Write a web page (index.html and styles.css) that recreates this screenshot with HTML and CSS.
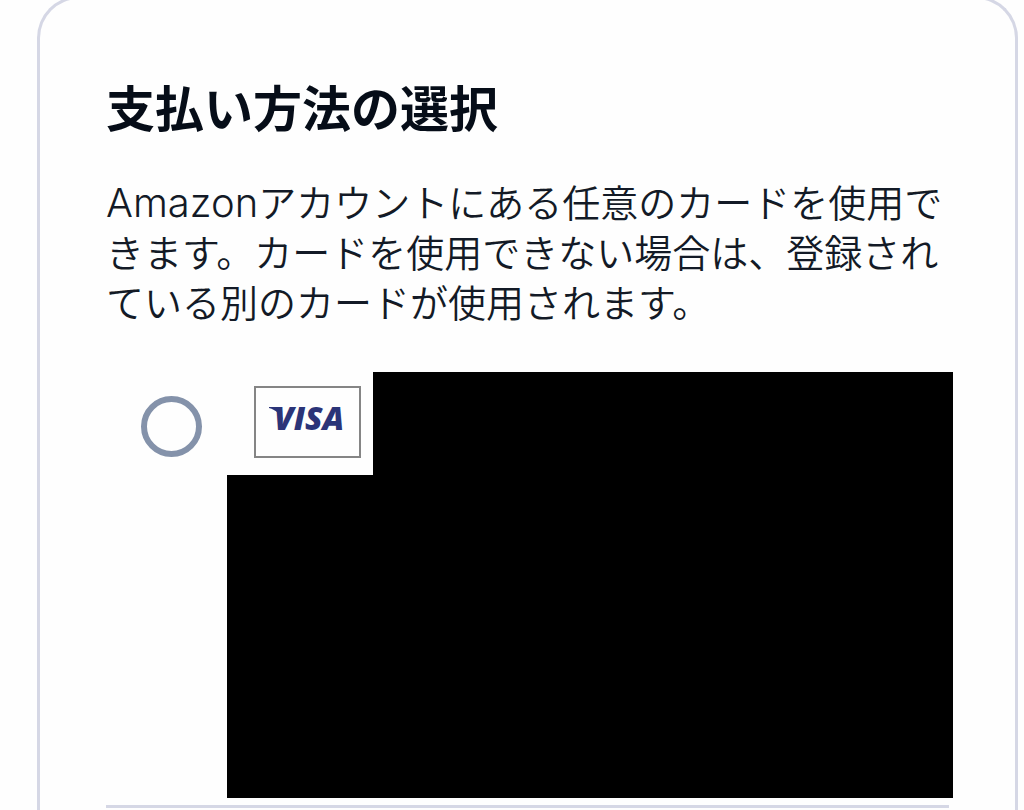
FILE: index.html
```
<!DOCTYPE html>
<html lang="ja">
<head>
    <meta charset="UTF-8">
    <meta name="viewport" content="width=device-width, initial-scale=1.0">
    <title>支払い方法の選択</title>
    <link rel="stylesheet" href="styles.css">
</head>
<body>
    <main class="card">
        <h1>支払い方法の選択</h1>
        <p class="description"><span class="latin">Amazon</span>アカウントにある任意のカードを使用できます。カードを使用できない場合は、登録されている別のカードが使用されます。</p>

        <div class="payment-list">
            <div class="payment">
                <input class="payment-radio" type="radio" name="payment" id="visa" aria-label="VISA">
                <label class="payment-body" for="visa">
                    <span class="payment-head">
                        <span class="brand">
                            <svg width="90" height="56" viewBox="0 0 90 56">
                                <path d="M6 13H17L20 27C18 20 13 16 6 14Z"/>
                                <text x="11" y="36">VISA</text>
                            </svg>
                        </span>
                        <span class="mask"></span>
                    </span>
                    <span class="mask mask-large"></span>
                </label>
            </div>
        </div>
        <hr class="divider">
    </main>
</body>
</html>
```

FILE: styles.css
```
* {
    box-sizing: border-box;
    margin: 0;
    padding: 0;
}
body {
    min-height: 100vh;
    background-color: #fefefe;
    color: #131a26;
    font-family: "Noto Sans CJK JP", sans-serif;
    overflow: hidden;
}
.card {
    min-height: calc(100vh + 4px);
    margin: -4px 6px 0 37px;
    padding: 75px 66px 0;
    border: 3px solid #d5d7e5;
    border-bottom: none;
    border-radius: 42px 42px 0 0;
}
h1 {
    color: #060d18;
    font-size: 49px;
    font-weight: 700;
    line-height: 64px;
    margin-bottom: 38px;
}
.description {
    font-size: 38px;
    font-weight: 350;
    line-height: 50px;
    margin-bottom: 46px;
}
.latin {
    font-family: Inter, sans-serif;
    font-size: 40px;
    line-height: 1;
}
.payment-list {
    margin-right: -4px;
}
.payment {
    display: flex;
    align-items: flex-start;
}
.payment-radio {
    appearance: none;
    flex: none;
    width: 61px;
    height: 61px;
    margin: 24px 25px 0 35px;
    border: 6px solid #8492aa;
    border-radius: 50%;
}
.payment-radio:checked {
    border-width: 18px;
}
.payment-body {
    flex: 1;
}
.payment-head {
    display: flex;
    height: 103px;
}
.brand {
    display: flex;
    flex: none;
    align-items: center;
    justify-content: center;
    width: 107px;
    height: 72px;
    margin: 14px 12px 0 27px;
    border: 2px solid #858585;
}
.brand svg {
    fill: #2b3478;
    font-family: "Open Sans", sans-serif;
    font-size: 32px;
    font-style: italic;
    font-weight: 800;
}
.mask {
    display: block;
    flex: 1;
    background-color: #000;
}
.mask-large {
    height: 323px;
}
.divider {
    margin-top: 7px;
    border: none;
    border-top: 3px solid #d5d7e5;
}
```
